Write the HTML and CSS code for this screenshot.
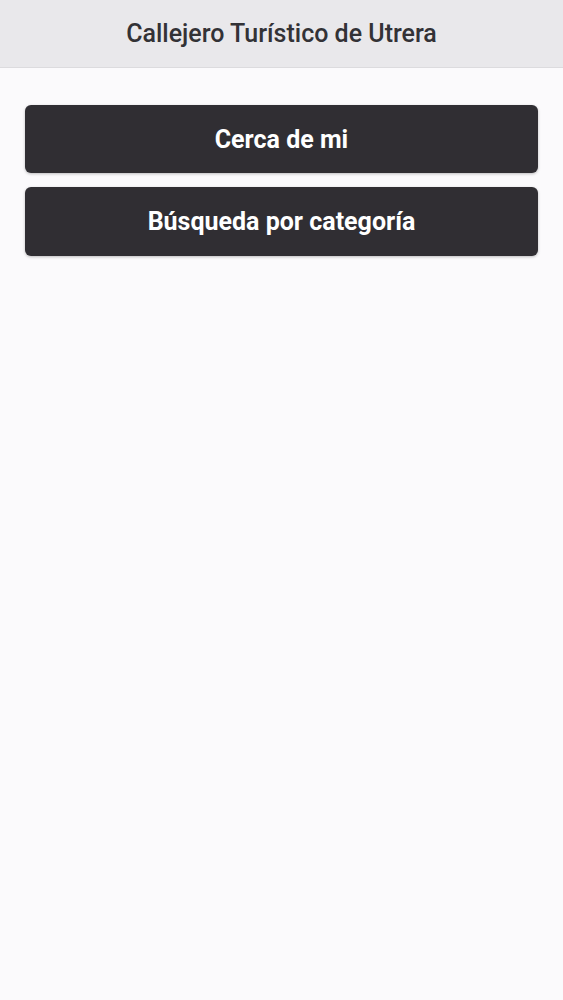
FILE: index.html
```html
<!DOCTYPE html>
<html lang="es">
<head>
<meta charset="utf-8">
<title>Callejero Turístico de Utrera</title>
<link rel="stylesheet" href="styles.css">
</head>
<body>
<header class="topbar">
  <h1 class="title">Callejero Turístico de Utrera</h1>
</header>
<main class="content">
  <button class="btn">Cerca de mi</button>
  <button class="btn">Búsqueda por categoría</button>
</main>
</body>
</html>
```

FILE: styles.css
```css
html, body {
  margin: 0;
  padding: 0;
  height: 100%;
}
body {
  background: #fbfafc;
  font-family: Roboto, "Liberation Sans", sans-serif;
}
.topbar {
  height: 68px;
  background: #e9e8eb;
  border-bottom: 1px solid #dcdbde;
  display: flex;
  align-items: center;
  justify-content: center;
  box-sizing: border-box;
}
.title {
  margin: 0;
  font-size: 25px;
  font-weight: 500;
  color: #333236;
  line-height: 1;
}
.content {
  padding: 37px 25px 0 25px;
  display: flex;
  flex-direction: column;
  gap: 14px;
}
.btn {
  height: 68px;
  width: 100%;
  border: none;
  border-radius: 6px;
  background: #302e33;
  color: #ffffff;
  font-family: Roboto, "Liberation Sans", sans-serif;
  font-size: 25px;
  font-weight: 700;
  box-shadow: 0 1px 3px rgba(0,0,0,0.25);
  cursor: pointer;
}
.btn + .btn {
  height: 69px;
}
```
